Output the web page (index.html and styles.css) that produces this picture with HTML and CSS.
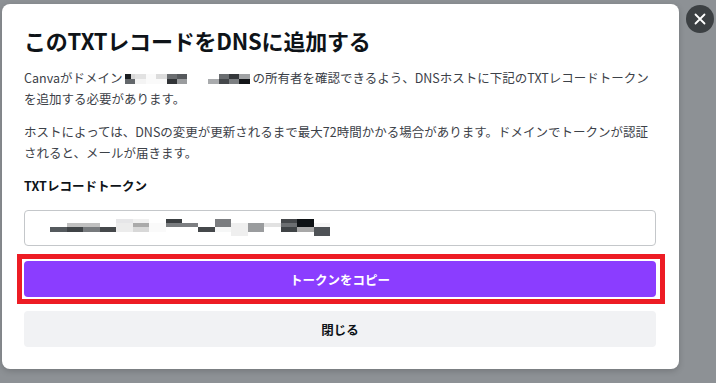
FILE: index.html
```html
<!DOCTYPE html>
<html lang="ja">
<head>
<meta charset="utf-8">
<title>TXTレコード</title>
<link rel="stylesheet" href="styles.css">
</head>
<body>
<div class="modal">
  <h1 class="title">このTXTレコードをDNSに追加する</h1>
  <p class="text">Canvaがドメイン<svg class="mosaic-inline" width="125" height="10" viewBox="0 0 125 10" shape-rendering="crispEdges">
      <rect x="0" y="0" width="6" height="5" fill="#1c1f22"/><rect x="0" y="5" width="10.4" height="5" fill="#63676b"/>
      <rect x="6" y="0" width="4.4" height="5" fill="#d8d8d8"/>
      <rect x="10.4" y="0" width="10.4" height="5" fill="#e2e2e2"/><rect x="10.4" y="5" width="10.4" height="5" fill="#f4f4f4"/>
      <rect x="20.8" y="0" width="10.4" height="10" fill="#fafafa"/>
      <rect x="31.2" y="0" width="10.4" height="5" fill="#dcdcdc"/><rect x="31.2" y="5" width="10.4" height="5" fill="#fafafa"/>
      <rect x="41.6" y="0" width="10.4" height="5" fill="#6a6d70"/><rect x="41.6" y="5" width="10.4" height="5" fill="#303336"/>
      <rect x="52" y="0" width="10.4" height="5" fill="#56595c"/><rect x="52" y="5" width="10.4" height="5" fill="#9a9c9e"/>
      <rect x="83.2" y="5" width="10.4" height="5" fill="#a9abad"/>
      <rect x="93.6" y="0" width="10.4" height="5" fill="#6a6d70"/><rect x="93.6" y="5" width="10.4" height="5" fill="#45484b"/>
      <rect x="104" y="0" width="10.4" height="5" fill="#35383b"/><rect x="104" y="5" width="10.4" height="5" fill="#7c7f82"/>
      <rect x="114.4" y="0" width="10.6" height="5" fill="#a0a2a4"/><rect x="114.4" y="5" width="10.6" height="5" fill="#121518"/>
    </svg>の所有者を確認できるよう、DNSホストに下記のTXTレコードトークンを追加する必要があります。</p>
  <p class="text">ホストによっては、DNSの変更が更新されるまで最大72時間かかる場合があります。ドメインでトークンが認証されると、メールが届きます。</p>
  <div class="label">TXTレコードトークン</div>
  <div class="field">
    <svg class="mosaic-token" width="280" height="17" viewBox="0 0 280 17" shape-rendering="crispEdges">
      <rect x="0" y="8" width="16.7" height="4.7" fill="#555a5e"/>
      <rect x="16.7" y="4" width="16.6" height="4" fill="#c0c0c0"/><rect x="16.7" y="8" width="16.6" height="4.7" fill="#3f4346"/>
      <rect x="33.3" y="4" width="16.7" height="4" fill="#c0c0c0"/><rect x="33.3" y="8" width="16.7" height="4.7" fill="#777a7d"/>
      <rect x="50" y="8" width="16" height="4.7" fill="#45484b"/>
      <rect x="66" y="0" width="16.7" height="4" fill="#e6e6e8"/><rect x="66" y="4" width="16.7" height="8.7" fill="#ececec"/>
      <rect x="82.7" y="0" width="16.6" height="4" fill="#f0f0f0"/><rect x="82.7" y="4" width="16.6" height="4" fill="#aaaaaa"/><rect x="82.7" y="8" width="16.6" height="4.7" fill="#d8d8d8"/>
      <rect x="99.3" y="4" width="16.7" height="8.7" fill="#fafafa"/>
      <rect x="116" y="0" width="15.7" height="4" fill="#3b3f42"/><rect x="116" y="4" width="15.7" height="4" fill="#7a7d80"/>
      <rect x="131.7" y="4" width="16.6" height="4" fill="#7d7f82"/>
      <rect x="148.3" y="8" width="16.7" height="4.7" fill="#45484b"/>
      <rect x="165" y="0" width="16" height="8" fill="#7b7d80"/><rect x="165" y="8" width="16" height="4.7" fill="#f6f7f7"/>
      <rect x="181" y="4" width="16.7" height="12.7" fill="#efefef"/>
      <rect x="197.7" y="4" width="16.6" height="8.7" fill="#9a9c9e"/>
      <rect x="214.3" y="4" width="16.7" height="4" fill="#e2e2e2"/>
      <rect x="231" y="0" width="16" height="4" fill="#45484b"/><rect x="231" y="4" width="16" height="4" fill="#6b6e71"/><rect x="231" y="8" width="16" height="4.7" fill="#3f4346"/>
      <rect x="247" y="0" width="16.7" height="8" fill="#0e1215"/><rect x="247" y="8" width="16.7" height="4.7" fill="#a8a8a8"/>
      <rect x="263.7" y="4" width="16.3" height="4" fill="#f6f6f6"/><rect x="263.7" y="8" width="16.3" height="8.7" fill="#4e5256"/>
    </svg>
  </div>
  <div class="highlight">
    <button class="btn btn-primary" type="button">トークンをコピー</button>
  </div>
  <button class="btn btn-secondary" type="button">閉じる</button>
</div>
<button class="close" type="button" aria-label="閉じる">
  <svg width="12" height="12" viewBox="0 0 12 12"><path d="M1.5 1.5 L10.5 10.5 M10.5 1.5 L1.5 10.5" stroke="#fff" stroke-width="1.8" stroke-linecap="round"/></svg>
</button>
</body>
</html>
```

FILE: styles.css
```css
html, body {
  margin: 0;
  padding: 0;
  height: 100%;
}
body {
  background: #8d9195;
  font-family: "Noto Sans CJK JP", "Noto Sans", sans-serif;
  padding: 4px 0 0 2px;
  box-sizing: border-box;
  position: relative;
  overflow: hidden;
}
.modal {
  width: 677px;
  height: 365px;
  box-sizing: border-box;
  background: #fff;
  border-radius: 8px;
  box-shadow: 0 2px 6px rgba(0, 0, 0, 0.18);
  padding: 21px 23px 0 22px;
  display: flex;
  flex-direction: column;
}
.title {
  margin: 0;
  font-size: 22px;
  line-height: 30px;
  font-weight: 700;
  color: #0e1318;
  letter-spacing: -0.2px;
}
.text {
  margin: 12px 0 0;
  font-size: 12.5px;
  line-height: 21px;
  color: #3c4148;
}
.mosaic-inline {
  vertical-align: -1px;
  margin: 0 2px 0 3px;
}
.label {
  margin-top: 12px;
  font-size: 12.5px;
  line-height: 21px;
  font-weight: 700;
  color: #0e1318;
}
.field {
  margin-top: 14px;
  height: 36px;
  box-sizing: border-box;
  border: 1px solid #c4c7ca;
  border-radius: 4px;
  display: flex;
  align-items: center;
  padding: 0 0 2px 25px;
}
.mosaic-token {
  display: block;
}
.highlight {
  margin: 8px -9px 0 -7px;
  border: 5px solid #ed1c24;
  padding: 2px 4px 2px 2px;
}
.btn {
  display: block;
  height: 36px;
  border: 0;
  border-radius: 4px;
  font-family: inherit;
  font-size: 12.5px;
  font-weight: 700;
  width: 100%;
  padding: 0;
}
.btn-primary {
  background: #8b3dff;
  color: #fff;
}
.btn-secondary {
  margin-top: 7px;
  background: #f1f2f4;
  color: #0e1318;
}
.close {
  position: absolute;
  left: 686px;
  top: 5px;
  width: 28px;
  height: 28px;
  border-radius: 50%;
  border: 0;
  padding: 0;
  background: #3c4043;
  display: flex;
  align-items: center;
  justify-content: center;
}
```
